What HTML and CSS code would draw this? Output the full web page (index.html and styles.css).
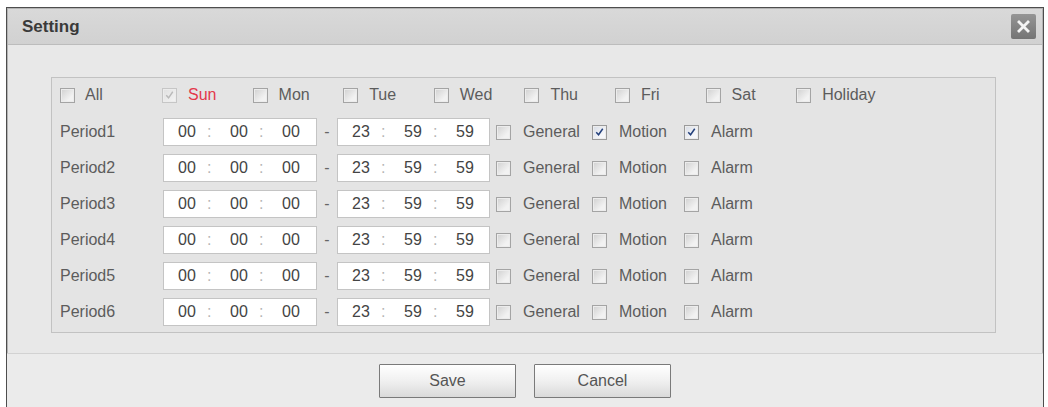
FILE: index.html
```html
<!DOCTYPE html>
<html>
<head>
<meta charset="utf-8">
<link rel="stylesheet" href="styles.css">
</head>
<body>
<div class="dialog">
  <div class="titlebar">
    <span class="title">Setting</span>
    <span class="close"><svg width="25" height="25" viewBox="0 0 25 25"><path d="M8 8 L17 17 M17 8 L8 17" stroke="#f4f4f4" stroke-width="2.8" stroke-linecap="square"/></svg></span>
  </div>
  <div class="body">
    <div class="panel">
      <div class="days">
        <label class="day first"><span class="cb"></span><span>All</span></label>
        <label class="day"><span class="cb dis"><svg width="14" height="14" viewBox="0 0 14 14"><path d="M3.5 7.2 L6 10 L10.5 3.5" fill="none" stroke="#b9b9b9" stroke-width="1.5"/></svg></span><span class="sun">Sun</span></label>
        <label class="day"><span class="cb"></span><span>Mon</span></label>
        <label class="day"><span class="cb"></span><span>Tue</span></label>
        <label class="day"><span class="cb"></span><span>Wed</span></label>
        <label class="day"><span class="cb"></span><span>Thu</span></label>
        <label class="day"><span class="cb"></span><span>Fri</span></label>
        <label class="day"><span class="cb"></span><span>Sat</span></label>
        <label class="day"><span class="cb"></span><span>Holiday</span></label>
      </div>

      <div class="period">
        <span class="plabel">Period1</span>
        <span class="time"><span class="seg">00</span><span class="colon">:</span><span class="seg">00</span><span class="colon">:</span><span class="seg">00</span></span>
        <span class="dash">-</span>
        <span class="time"><span class="seg">23</span><span class="colon">:</span><span class="seg">59</span><span class="colon">:</span><span class="seg">59</span></span>
        <label class="opt"><span class="cb"></span><span>General</span></label>
        <label class="opt"><span class="cb on"><svg width="14" height="14" viewBox="0 0 14 14"><path d="M3.5 7.2 L6 10 L10.5 3.5" fill="none" stroke="#23407c" stroke-width="1.6"/></svg></span><span>Motion</span></label>
        <label class="opt"><span class="cb on"><svg width="14" height="14" viewBox="0 0 14 14"><path d="M3.5 7.2 L6 10 L10.5 3.5" fill="none" stroke="#23407c" stroke-width="1.6"/></svg></span><span>Alarm</span></label>
      </div>

      <div class="period">
        <span class="plabel">Period2</span>
        <span class="time"><span class="seg">00</span><span class="colon">:</span><span class="seg">00</span><span class="colon">:</span><span class="seg">00</span></span>
        <span class="dash">-</span>
        <span class="time"><span class="seg">23</span><span class="colon">:</span><span class="seg">59</span><span class="colon">:</span><span class="seg">59</span></span>
        <label class="opt"><span class="cb"></span><span>General</span></label>
        <label class="opt"><span class="cb"></span><span>Motion</span></label>
        <label class="opt"><span class="cb"></span><span>Alarm</span></label>
      </div>

      <div class="period">
        <span class="plabel">Period3</span>
        <span class="time"><span class="seg">00</span><span class="colon">:</span><span class="seg">00</span><span class="colon">:</span><span class="seg">00</span></span>
        <span class="dash">-</span>
        <span class="time"><span class="seg">23</span><span class="colon">:</span><span class="seg">59</span><span class="colon">:</span><span class="seg">59</span></span>
        <label class="opt"><span class="cb"></span><span>General</span></label>
        <label class="opt"><span class="cb"></span><span>Motion</span></label>
        <label class="opt"><span class="cb"></span><span>Alarm</span></label>
      </div>

      <div class="period">
        <span class="plabel">Period4</span>
        <span class="time"><span class="seg">00</span><span class="colon">:</span><span class="seg">00</span><span class="colon">:</span><span class="seg">00</span></span>
        <span class="dash">-</span>
        <span class="time"><span class="seg">23</span><span class="colon">:</span><span class="seg">59</span><span class="colon">:</span><span class="seg">59</span></span>
        <label class="opt"><span class="cb"></span><span>General</span></label>
        <label class="opt"><span class="cb"></span><span>Motion</span></label>
        <label class="opt"><span class="cb"></span><span>Alarm</span></label>
      </div>

      <div class="period">
        <span class="plabel">Period5</span>
        <span class="time"><span class="seg">00</span><span class="colon">:</span><span class="seg">00</span><span class="colon">:</span><span class="seg">00</span></span>
        <span class="dash">-</span>
        <span class="time"><span class="seg">23</span><span class="colon">:</span><span class="seg">59</span><span class="colon">:</span><span class="seg">59</span></span>
        <label class="opt"><span class="cb"></span><span>General</span></label>
        <label class="opt"><span class="cb"></span><span>Motion</span></label>
        <label class="opt"><span class="cb"></span><span>Alarm</span></label>
      </div>

      <div class="period">
        <span class="plabel">Period6</span>
        <span class="time"><span class="seg">00</span><span class="colon">:</span><span class="seg">00</span><span class="colon">:</span><span class="seg">00</span></span>
        <span class="dash">-</span>
        <span class="time"><span class="seg">23</span><span class="colon">:</span><span class="seg">59</span><span class="colon">:</span><span class="seg">59</span></span>
        <label class="opt"><span class="cb"></span><span>General</span></label>
        <label class="opt"><span class="cb"></span><span>Motion</span></label>
        <label class="opt"><span class="cb"></span><span>Alarm</span></label>
      </div>
    </div>
  </div>
  <div class="footer">
    <button class="btn">Save</button>
    <button class="btn">Cancel</button>
  </div>
</div>
</body>
</html>
```

FILE: styles.css
```css
* { box-sizing: border-box; }

html, body {
  margin: 0;
  padding: 0;
  background: #ffffff;
  font-family: "Liberation Sans", Arial, sans-serif;
  font-size: 16px;
  color: #555;
}

.dialog {
  margin: 7px 0 0 6px;
  width: 1038px;
  border: 1px solid #4d4d4d;
  border-bottom: none;
  background: #e8e8e8;
  box-shadow: inset 0 0 0 1px #b4b4b4;
}

.titlebar {
  height: 36px;
  display: flex;
  align-items: center;
  justify-content: space-between;
  padding: 0 6px 0 14px;
  background: linear-gradient(#d9d9d9, #d1d1d1);
  border-bottom: 1px solid #bcbcbc;
  margin: 1px 1px 0 1px;
}

.title {
  font-weight: bold;
  font-size: 17px;
  color: #3a3a3a;
}

.close {
  width: 25px;
  height: 25px;
  border-radius: 2px;
  background: linear-gradient(#959595, #747474);
  display: flex;
}

.body {
  padding: 32px 0 20px 44px;
  border-bottom: 1px solid #d2d2d2;
}

.panel {
  width: 945px;
  border: 1px solid #c2c2c2;
  background: #e4e4e4;
  padding: 7px 0 6px 8px;
}

.days {
  display: flex;
  align-items: center;
  height: 20px;
  margin-bottom: 13px;
}

.day {
  display: flex;
  align-items: center;
  width: 90.6px;
  gap: 11px;
  color: #5c5c5c;
}

.day.first { width: 102px; gap: 10px; }

.sun { color: #e3374b; }

.cb {
  width: 15px;
  height: 15px;
  flex: none;
  border: 1px solid #a4a4a4;
  background: linear-gradient(135deg, #d0d0d0, #f2f2f2 70%);
  box-shadow: inset 0 0 0 1px #ececec;
  display: flex;
  align-items: center;
  justify-content: center;
}

.cb svg { display: block; }

.cb.dis {
  border-color: #c6c6c6;
  background: linear-gradient(135deg, #e0e0e0, #f4f4f4);
}

.cb.on {
  border-color: #9a9a9a;
  background: linear-gradient(135deg, #d6dbe4, #f6f7fa 70%);
}

.period {
  display: flex;
  align-items: center;
  height: 28px;
  margin-bottom: 8px;
}

.period:last-child { margin-bottom: 0; }

.plabel {
  width: 103px;
  color: #5c5c5c;
}

.time {
  width: 154px;
  height: 28px;
  display: flex;
  align-items: center;
  padding-left: 5px;
  background: #ffffff;
  border: 1px solid #c4c4c4;
  color: #444;
}

.time + .dash + .time { width: 153px; }

.seg {
  width: 36px;
  text-align: center;
}

.colon {
  width: 16px;
  padding-left: 2px;
  color: #b5b5b5;
}

.dash {
  width: 20px;
  text-align: center;
  color: #666;
}

.opt {
  display: flex;
  align-items: center;
  gap: 12px;
  margin-left: 6px;
  margin-right: 12px;
  color: #5c5c5c;
}

.opt + .opt { margin-left: 0; margin-right: 17px; }

.footer {
  display: flex;
  justify-content: center;
  gap: 18px;
  padding: 10px 0 12px 0;
  background: #ebebeb;
}

.btn {
  width: 137px;
  height: 34px;
  border: 1px solid #7a7a7a;
  border-radius: 1px;
  background: linear-gradient(#ffffff, #f0f0f0 50%, #dadada);
  font-family: "Liberation Sans", Arial, sans-serif;
  font-size: 16px;
  color: #555;
  padding: 0;
}
```
